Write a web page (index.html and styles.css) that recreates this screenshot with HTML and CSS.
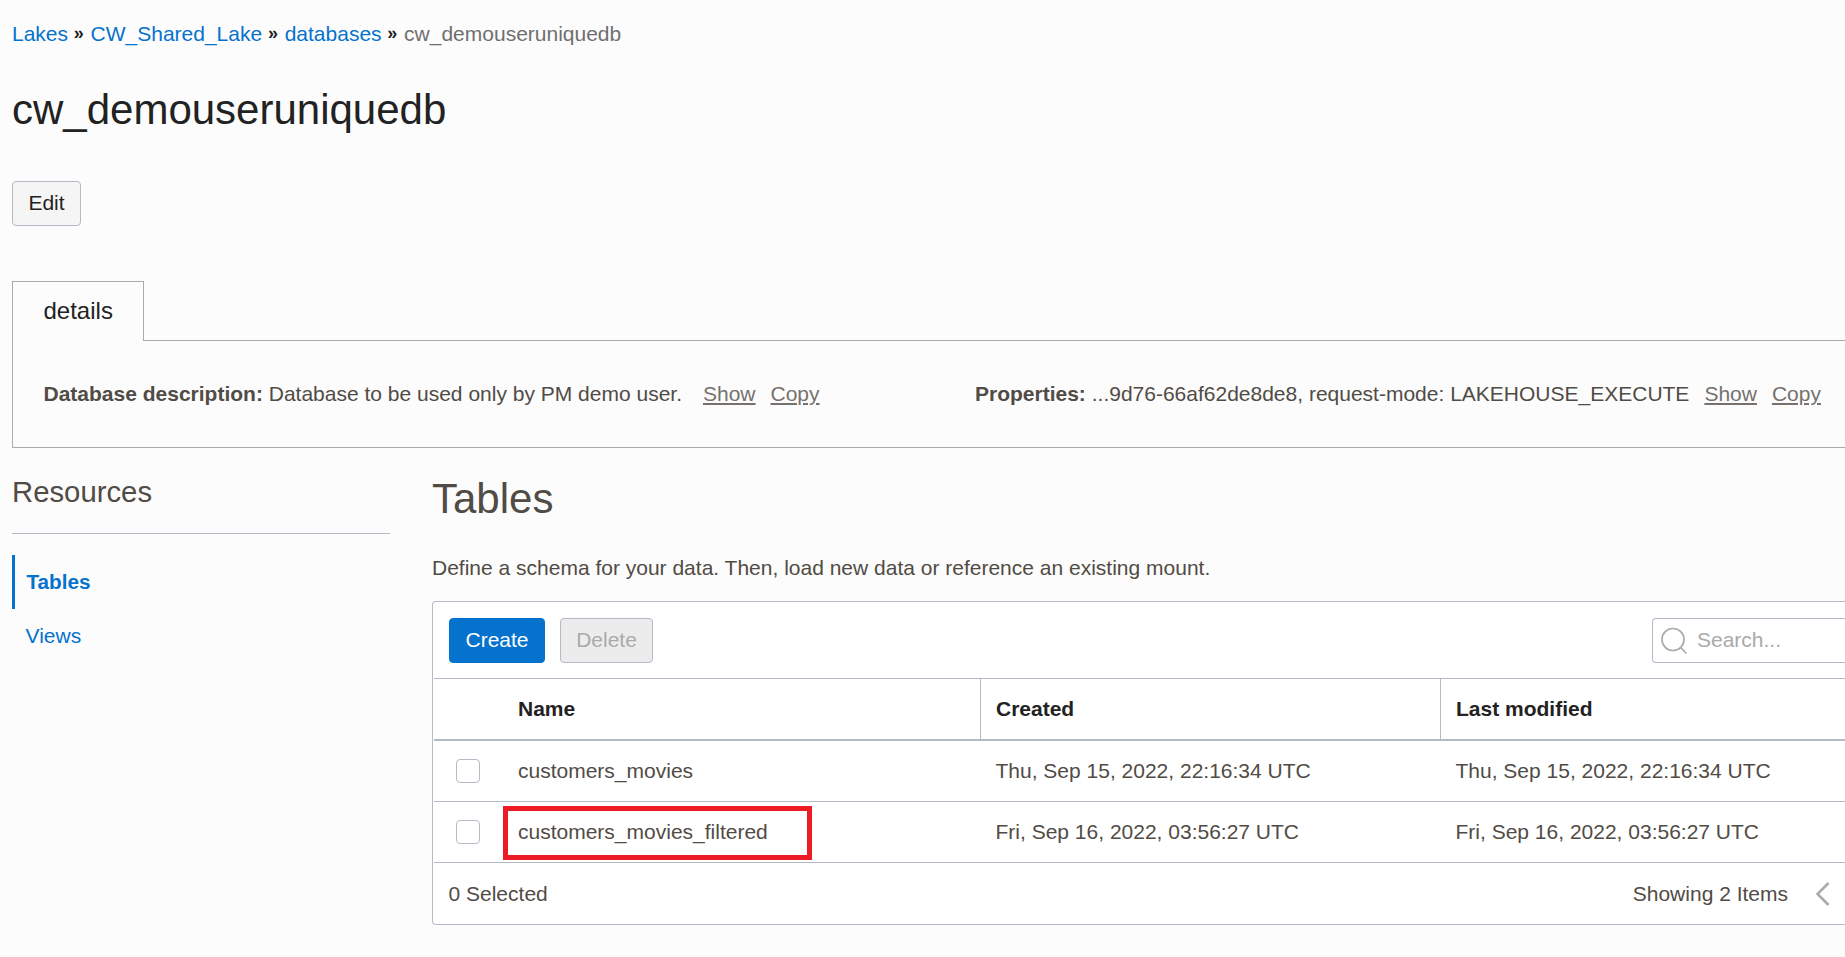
FILE: index.html
```html
<!DOCTYPE html>
<html lang="en">
<head>
<meta charset="utf-8">
<title>cw_demouseruniquedb</title>
<link rel="stylesheet" href="styles.css">
</head>
<body>
<nav class="breadcrumb">
  <a>Lakes</a><span class="sep">»</span><a>CW_Shared_Lake</a><span class="sep">»</span><a>databases</a><span class="sep">»</span><span class="current">cw_demouseruniquedb</span>
</nav>
<h1 class="title">cw_demouseruniquedb</h1>
<button class="btn edit">Edit</button>
<section class="details">
  <div class="tabs"><div class="tab">details</div><div class="tab-rest"></div></div>
  <div class="panel">
    <div class="field"><span><b>Database description:</b> Database to be used only by PM demo user.</span><a class="show">Show</a><a>Copy</a></div>
    <div class="field last"><span><b>Properties:</b> ...9d76-66af62de8de8, request-mode: LAKEHOUSE_EXECUTE</span><a class="show near">Show</a><a>Copy</a></div>
  </div>
</section>
<div class="columns">
  <aside class="sidebar">
    <h3 class="side-title">Resources</h3>
    <div class="side-item active">Tables</div>
    <div class="side-item">Views</div>
  </aside>
  <main class="main">
    <h2 class="heading">Tables</h2>
    <p class="intro">Define a schema for your data. Then, load new data or reference an existing mount.</p>
    <div class="card">
      <div class="toolbar">
        <button class="btn primary">Create</button>
        <button class="btn disabled">Delete</button>
        <div class="search">
          <svg class="search-icon" width="28" height="28" viewBox="0 0 28 28"><circle cx="13" cy="12.5" r="11" /><path d="M20.5 20.5L26.5 26.5" /></svg>
          <span>Search...</span>
        </div>
      </div>
      <div class="row head"><div></div><div>Name</div><div class="split">Created</div><div class="split">Last modified</div></div>
      <div class="row"><div><span class="check"></span></div><div>customers_movies</div><div>Thu, Sep 15, 2022, 22:16:34 UTC</div><div>Thu, Sep 15, 2022, 22:16:34 UTC</div></div>
      <div class="row"><div><span class="check"></span></div><div class="marked">customers_movies_filtered</div><div>Fri, Sep 16, 2022, 03:56:27 UTC</div><div>Fri, Sep 16, 2022, 03:56:27 UTC</div></div>
      <div class="footer"><span>0 Selected</span><span class="count">Showing 2 Items</span>
        <svg class="chevron" width="16" height="26" viewBox="0 0 16 26"><path d="M13.5 2L2.5 13L13.5 24" /></svg>
      </div>
    </div>
  </main>
</div>
</body>
</html>
```

FILE: styles.css
```css
* { box-sizing: border-box; }
html, body { margin: 0; height: 957px; overflow: hidden; }
body {
  padding: 22px 0 0 12px;
  background: #fcfcfc;
  color: #514b45;
  font: 21px/24px "Liberation Sans", Arial, sans-serif;
  white-space: nowrap;
}
h1, h2, h3, p { margin: 0; font-weight: 400; }

.breadcrumb { display: flex; height: 24px; color: #0572ce; }
.breadcrumb .sep { width: 22.5px; padding-right: 1px; text-align: center; color: #222; font-size: 18px; line-height: 23px; font-weight: 700; }
.breadcrumb .current { color: #6f6f6f; }

.title { margin-top: 40px; font-size: 42px; line-height: 48px; color: #222; }

.btn {
  display: block;
  height: 45px;
  padding: 0 15px 2px;
  border: 1px solid #b4bac6;
  border-radius: 4px;
  background: #f5f5f5;
  color: #222;
  font: inherit;
}
.edit { width: 69px; margin-top: 47px; }

.details { margin-top: 55px; }
.tabs { display: flex; height: 60px; }
.tab {
  width: 132px;
  padding: 15px 0 0 30.5px;
  border: 1px solid #aaa;
  border-bottom: 0;
  font-size: 24px;
  line-height: 27px;
  color: #222;
}
.tab-rest { flex: 1; border-bottom: 1px solid #aaa; }
.panel {
  display: flex;
  height: 107px;
  padding: 41px 0 0 30.5px;
  border: 1px solid #aaa;
  border-top: 0;
  border-right: 0;
}
.field { display: flex; width: 931.5px; }
.field.last { width: auto; }
.field a { color: #76716d; text-decoration: underline; text-decoration-thickness: 2px; text-underline-offset: 2px; margin-left: 15px; }
.field .show { margin-left: 21px; }
.field .near { margin-left: 15px; }

.columns { display: flex; gap: 42px; }
.sidebar { width: 378px; padding-top: 26px; }
.side-title { height: 60px; margin-bottom: 21px; border-bottom: 1px solid #b4bac6; font-size: 29.3px; line-height: 36px; }
.side-item { height: 54px; padding-left: 13.5px; line-height: 54px; color: #0572ce; }
.side-item.active { padding-left: 11.5px; border-left: 3px solid #0572ce; font-weight: 700; font-size: 20.7px; }

.main { flex: 1; min-width: 0; padding-top: 27px; }
.heading { font-size: 42px; line-height: 48px; }
.intro { margin-top: 33px; }
.card {
  margin-top: 21px;
  height: 324px;
  padding-left: 1px;
  border: 1px solid #b4bac6;
  border-right: 0;
  border-radius: 4px 0 0 4px;
  background: #fff;
}
.toolbar { display: flex; gap: 15px; height: 77px; padding: 16px 0 0 15px; border-bottom: 1px solid #b4bac6; }
.primary { width: 96px; padding: 0 0 2px; background: #0572ce; border-color: #0572ce; color: #fff; }
.disabled { width: 93px; padding: 0 0 2px; background: #ececec; color: #aaa; }
.search {
  display: flex;
  align-items: center;
  width: 193px;
  height: 45px;
  margin-left: auto;
  padding-left: 7px;
  border: 1px solid #b4bac6;
  border-right: 0;
  border-radius: 4px 0 0 4px;
  color: #aaa;
}
.search span { margin: 0 0 2px 9px; }
.search-icon, .chevron { fill: none; stroke: #aaa; stroke-width: 1.7; }

.row {
  display: grid;
  grid-template-columns: 84px 462px 460px 1fr;
  height: 61px;
  border-bottom: 1px solid #b4bac6;
  line-height: 60px;
}
.row > :nth-child(n+3) { padding-left: 15.5px; }
.head { height: 62px; border-bottom-width: 2px; color: #222; font-weight: 700; }
.head > .split { border-left: 1px solid #b4bac6; padding-left: 15px; }
.check { display: block; width: 24px; height: 24px; margin: 18px 0 0 22px; border: 1px solid #b4bac6; border-radius: 4px; }
.marked { position: relative; }
.marked::after { content: ""; position: absolute; box-sizing: border-box; left: -15px; top: 4px; width: 309px; height: 54px; border: 5px solid #ed1c24; }
.footer { display: flex; align-items: center; height: 61px; padding-left: 14.5px; }
.count { margin-left: 1085px; }
.chevron { margin-left: 27px; stroke-width: 2.5; }
```
